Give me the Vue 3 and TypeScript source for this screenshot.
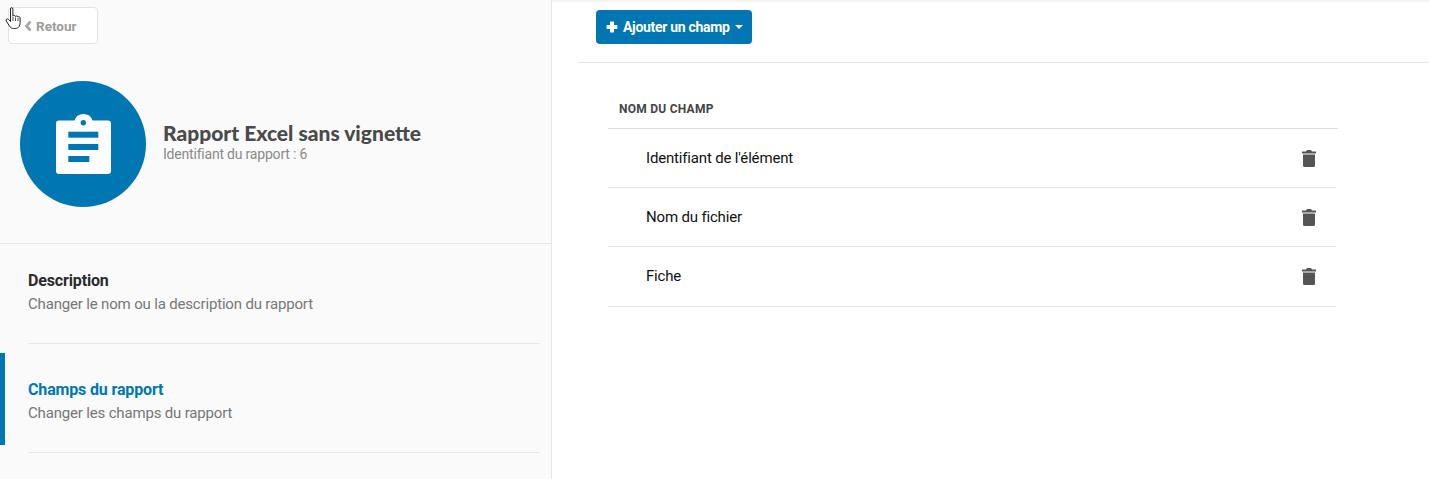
<script setup lang="ts">
interface NavItem {
  title: string
  desc: string
  active: boolean
}

const navItems: NavItem[] = [
  { title: 'Description', desc: 'Changer le nom ou la description du rapport', active: false },
  { title: 'Champs du rapport', desc: 'Changer les champs du rapport', active: true },
]

const fields = ["Identifiant de l'élément", 'Nom du fichier', 'Fiche']
</script>

<template>
  <div class="page">
    <aside class="sidebar">
      <div class="top">
        <button class="back">
          <svg class="chev" viewBox="0 0 8 12" width="8" height="12"><path d="M6.500 1.500 2.500 6l4 4.500" fill="none" stroke="#a8a8a8" stroke-width="2.800" /></svg>
          Retour
        </button>
      </div>
      <div class="head">
        <div class="avatar">
          <svg viewBox="0 0 55 60" width="55" height="60">
            <path d="M3 6.500h15.500a9.500 9.500 0 0 1 18 0H52a3 3 0 0 1 3 3V57a3 3 0 0 1-3 3H3a3 3 0 0 1-3-3V9.500a3 3 0 0 1 3-3z" fill="#fff" />
            <circle cx="27.300" cy="8.700" r="2.700" fill="#0077b3" />
            <rect x="12.300" y="17.700" width="30" height="6" fill="#0077b3" />
            <rect x="12.300" y="30" width="30" height="6" fill="#0077b3" />
            <rect x="12.300" y="42" width="21" height="6" fill="#0077b3" />
          </svg>
        </div>
        <div class="head-text">
          <h1>Rapport Excel sans vignette</h1>
          <p>Identifiant du rapport : 6</p>
        </div>
      </div>
      <nav class="nav">
        <div v-for="item in navItems" :key="item.title" class="nav-item" :class="{ active: item.active }">
          <div class="nav-body">
            <div class="nav-title">{{ item.title }}</div>
            <div class="nav-desc">{{ item.desc }}</div>
          </div>
        </div>
      </nav>
    </aside>

    <main class="content">
      <div class="toolbar">
        <button class="add">
          <svg viewBox="0 0 12 12" width="12" height="12"><path d="M4.600.6h2.800a.6.6 0 0 1 .6.600V4h2.800a.6.6 0 0 1 .6.600v2.800a.6.6 0 0 1-.6.600H8v2.800a.6.6 0 0 1-.6.600H4.600a.6.6 0 0 1-.6-.6V8H1.200a.6.6 0 0 1-.6-.6V4.600a.6.6 0 0 1 .6-.6H4V1.200a.6.6 0 0 1 .6-.6z" fill="#fff" /></svg>
          <span>Ajouter un champ</span>
          <i class="caret"></i>
        </button>
      </div>
      <div class="table">
        <div class="table-head">NOM DU CHAMP</div>
        <div v-for="f in fields" :key="f" class="row">
          <span>{{ f }}</span>
          <svg viewBox="0 0 14 17" width="14" height="17"><path d="M5 0h4l1 1.500h4v2H0v-2h4zM1 4.500h12V15.500a1.500 1.500 0 0 1-1.500 1.500h-9A1.500 1.500 0 0 1 1 15.500z" fill="#555" /></svg>
        </div>
      </div>
    </main>

    <svg class="cursor" viewBox="0 0 18 24" width="18" height="24">
      <path d="M5.500 2c0-1.800 2.400-1.800 2.400 0v7.200c.6-1 2.400-1 2.600.3.600-.8 2.300-.7 2.400.5.700-.6 2.200-.3 2.200 1v4.500c0 3.600-1.800 6-4.800 6H8.600c-2 0-3.200-1-4.200-2.600L1.300 14c-.9-1.500.9-2.900 2.200-1.600l2 2z" fill="#fff" stroke="#222" stroke-width="1" />
      <path d="M8 10v4M10.500 10.500V14M13 11v3" fill="none" stroke="#222" stroke-width=".8" />
    </svg>
  </div>
</template>

<style>
html,
body {
  margin: 0;
  background: #fff;
}
</style>

<style scoped>
.page {
  display: flex;
  width: 1429px;
  height: 479px;
  overflow: hidden;
  position: relative;
  font-family: Roboto, 'Liberation Sans', sans-serif;
}

.sidebar {
  width: 552px;
  box-sizing: border-box;
  height: 479px;
  flex: none;
  background: #fafafa;
  border-right: 1px solid #e6e6e6;
}

.top {
  padding: 7px 0 0 8px;
}

.back {
  display: flex;
  align-items: center;
  gap: 4px;
  width: 90px;
  height: 37px;
  box-sizing: border-box;
  padding: 0 0 0 15px;
  background: #fff;
  border: 1px solid #e2e2e2;
  border-radius: 4px;
  color: #9c9c9c;
  font: 700 13.5px Roboto, sans-serif;
}

.head {
  display: flex;
  align-items: center;
  gap: 17px;
  padding: 37px 0 36px 20px;
  border-bottom: 1px solid #e6e6e6;
}

.avatar {
  width: 126px;
  height: 126px;
  border-radius: 50%;
  background: #0077b3;
  display: flex;
  align-items: center;
  justify-content: center;
}

.head-text {
  margin-top: -5px;
}

.head-text h1 {
  margin: 0;
  font: 900 21px/24px Lato, sans-serif;
  color: #4a4a4a;
}

.head-text p {
  margin: 2px 0 0;
  font-size: 14px;
  line-height: 15px;
  letter-spacing: -0.2px;
  color: #8a8a8a;
}

.nav {
  display: flex;
  flex-direction: column;
}

.nav-item {
  height: 100px;
  padding-left: 28px;
  box-sizing: border-box;
  padding-right: 11px;
}

.nav-item.active {
  position: relative;
  margin-top: 9px;
}

.nav-item.active::before {
  content: '';
  position: absolute;
  left: 0;
  top: 0;
  width: 5px;
  height: 92px;
  background: #0077b3;
}

.nav-body {
  height: 100px;
  box-sizing: border-box;
  padding-top: 27px;
  border-bottom: 1px solid #e6e6e6;
}

.nav-title {
  font-size: 16px;
  font-weight: 700;
  line-height: 20px;
  letter-spacing: -0.15px;
  color: #2b2b2b;
}

.nav-item.active .nav-title {
  color: #0077b3;
}

.nav-desc {
  margin-top: 3px;
  font-size: 15px;
  line-height: 20px;
  letter-spacing: -0.17px;
  color: #777;
}

.content {
  flex: 1;
  box-shadow: inset 0 3px 3px -2px rgba(0, 0, 0, 0.08);
}

.toolbar {
  margin-left: 26px;
  padding: 10px 0 18px 18px;
  border-bottom: 1px solid #e6e6e6;
}

.add {
  display: flex;
  align-items: center;
  gap: 5px;
  width: 156px;
  height: 34px;
  box-sizing: border-box;
  padding: 0 0 0 10px;
  border: 0;
  border-radius: 4px;
  background: #0077b3;
  color: #fff;
  font: 700 14px Roboto, sans-serif;
  letter-spacing: -0.3px;
}

.caret {
  border-left: 4px solid transparent;
  border-right: 4px solid transparent;
  border-top: 4px solid #fff;
}

.table {
  width: 730px;
  margin: 0 0 0 56px;
}

.table-head {
  box-sizing: border-box;
  height: 66px;
  padding: 38px 0 0 11px;
  border-bottom: 1px solid #ddd;
  font-size: 12px;
  font-weight: 700;
  line-height: 16px;
  letter-spacing: 0.25px;
  color: #444;
}

.row {
  display: flex;
  align-items: center;
  justify-content: space-between;
  width: 728px;
  height: 59px;
  box-sizing: border-box;
  padding: 0 20px 0 38px;
  border-bottom: 1px solid #e6e6e6;
  font-size: 15px;
  letter-spacing: -0.17px;
  color: #111;
}

.row:last-child {
  height: 60px;
  padding-bottom: 1px;
}

.cursor {
  position: absolute;
  left: 5px;
  top: 7px;
}
</style>
